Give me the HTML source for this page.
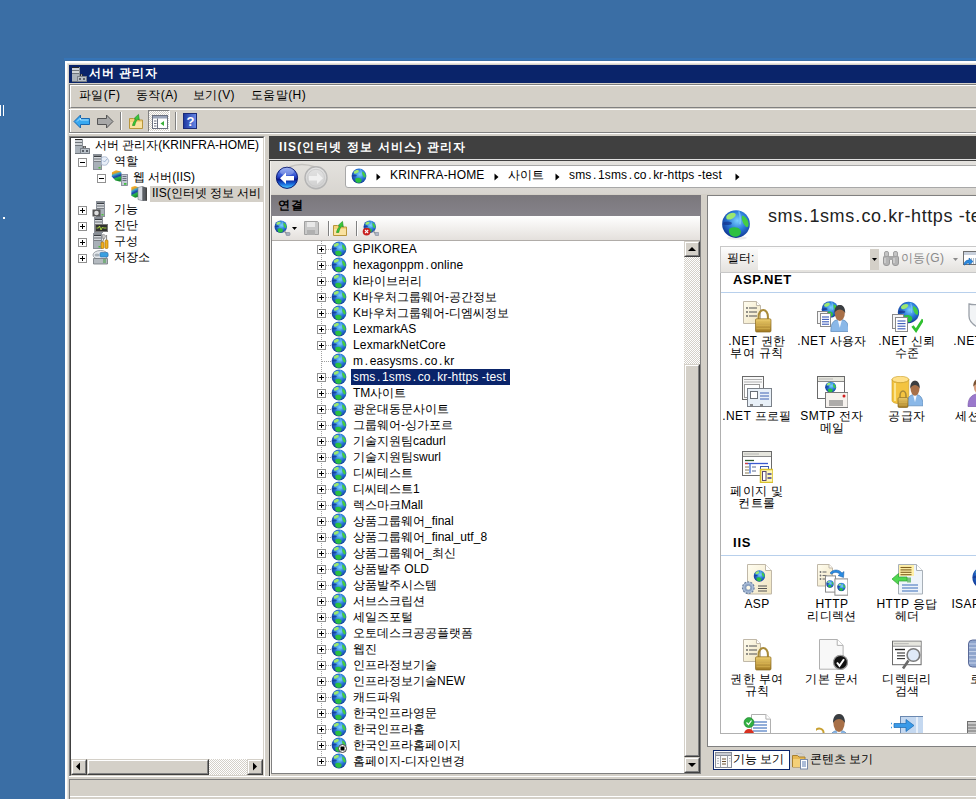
<!DOCTYPE html>
<html><head><meta charset="utf-8">
<style>
*{box-sizing:border-box}
html,body{margin:0;padding:0}
body{width:976px;height:799px;overflow:hidden;position:relative;background:#3a6ea5;font-family:"Liberation Sans",sans-serif;font-size:12px;color:#000}
.a{position:absolute;display:block}
.t{position:absolute;white-space:nowrap;line-height:14px}
.lbl{position:absolute;width:75px;text-align:center;line-height:12px;white-space:nowrap;letter-spacing:0.4px}
.dith{background:repeating-conic-gradient(#fff 0 25%,#d4d0c8 0 50%) 0 0/2px 2px}
</style></head><body>


<svg width="0" height="0" style="position:absolute">
<defs>
<radialGradient id="gglobe" cx="0.55" cy="0.38" r="0.68">
 <stop offset="0" stop-color="#7ad0ff"/><stop offset="0.5" stop-color="#2a78d8"/><stop offset="1" stop-color="#0c2a86"/>
</radialGradient>
<radialGradient id="gblue" cx="0.5" cy="0.3" r="0.7">
 <stop offset="0" stop-color="#8fd0ff"/><stop offset="0.55" stop-color="#1f6fd0"/><stop offset="1" stop-color="#0a2f8a"/>
</radialGradient>
<radialGradient id="ggray" cx="0.5" cy="0.3" r="0.7">
 <stop offset="0" stop-color="#f0f0f0"/><stop offset="0.6" stop-color="#d0d0d0"/><stop offset="1" stop-color="#b0b0b0"/>
</radialGradient>
<linearGradient id="ggold" x1="0" y1="0" x2="0" y2="1">
 <stop offset="0" stop-color="#f0d070"/><stop offset="1" stop-color="#a07820"/>
</linearGradient>
<linearGradient id="gpaper" x1="0" y1="0" x2="1" y2="1">
 <stop offset="0" stop-color="#fffdf0"/><stop offset="1" stop-color="#f0e4c0"/>
</linearGradient>
<symbol id="g16" viewBox="0 0 16 16">
 <circle cx="8" cy="8" r="7.4" fill="url(#gglobe)"/>
 <path d="M3 3.6c1.4-1.6 3.6-2 4.6-1.2.8.9-.4 2-1.4 2.6-1 .6-2.4.9-3 .4-.5-.4-.5-1.2-.2-1.8z" fill="#9be870"/>
 <path d="M1.2 7.2c1.2-.6 3-.8 4.2-.2.8.5.2 1.2-.8 1.4-1.2.2-2.4.1-3.4-.2z" fill="#14308a" opacity="0.7"/>
 <path d="M4.6 10.4c1.8-1 4.4-.9 5.6.5 1 1.3.3 3.2-1.6 3.8-1.9.5-3.6-.4-4.1-1.8-.3-.9-.4-1.8.1-2.5z" fill="#2cc040"/>
 <path d="M11.4 3.4c1.8.5 3.2 2.4 3.3 4.4.1 1.4-.6 2.2-1.4 1.6-.9-.8-1.8-2.3-2.1-3.7-.2-.9-.2-1.8.2-2.3z" fill="#44cc44"/>
 <path d="M9.5 1.2c.8 2 1 4.5.6 7" stroke="#8ad8ff" stroke-width="0.8" fill="none" opacity="0.6"/>
</symbol>
<symbol id="g32" viewBox="0 0 32 32">
 <ellipse cx="16.5" cy="29" rx="10" ry="2" fill="#000" opacity="0.12"/>
 <circle cx="16" cy="15" r="14.5" fill="url(#gglobe)"/>
 <path d="M5 8c3-3 7-4 9-2 1.5 1.6-1 3-3 4.5-1.8 1.3-1.5 3.6-3.6 3.6S3.6 12 4 10z" fill="#3cbc3c"/>
 <path d="M10 20c3-1.6 7-1.2 9 1.2 1.8 2.2.4 5-2.8 6-3.2.8-6-.8-6.8-3.2z" fill="#30b040"/>
 <path d="M22 4c3 1.2 5.6 4.6 6 8 .2 2-1.6 1.6-2.6 0-1.4-2.2-4.4-5.2-3.4-8z" fill="#58d050"/>
 <ellipse cx="11" cy="7" rx="5" ry="3" fill="#fff" opacity="0.35"/>
</symbol>
<symbol id="plus" viewBox="0 0 9 9">
 <rect x="0.5" y="0.5" width="8" height="8" fill="#fff" stroke="#919191"/>
 <rect x="2" y="4" width="5" height="1" fill="#000"/><rect x="4" y="2" width="1" height="5" fill="#000"/>
</symbol>
<symbol id="minus" viewBox="0 0 9 9">
 <rect x="0.5" y="0.5" width="8" height="8" fill="#fff" stroke="#919191"/>
 <rect x="2" y="4" width="5" height="1" fill="#000"/>
</symbol>
<symbol id="server" viewBox="0 0 16 16">
 <rect x="1.5" y="0.5" width="8" height="15" fill="#d4d8dc" stroke="#8a9098"/>
 <rect x="2" y="8" width="7" height="7" fill="#a8b0b8"/>
 <rect x="2" y="1.5" width="7" height="1.5" fill="#3a3e44"/>
 <rect x="2" y="4.5" width="7" height="1" fill="#6a6e74"/>
 <rect x="2" y="7" width="7" height="1" fill="#7a7e84"/>
 <rect x="6.5" y="13" width="2" height="1.5" fill="#50c040"/>
</symbol>
<symbol id="lock32" viewBox="0 0 32 32">
 <path d="M18 19v-4a5 5 0 0 1 10 0v4" fill="none" stroke="#a08030" stroke-width="2.4"/>
 <rect x="15" y="18" width="16" height="13" rx="1.5" fill="url(#ggold)" stroke="#8a6a20"/>
 <path d="M16 21h14M16 24h14M16 27h14" stroke="#c8a040" stroke-width="1"/>
</symbol>
<symbol id="doclist" viewBox="0 0 32 32">
 <path d="M6.5 0.5h12l5 5v17h-17z" fill="url(#gpaper)" stroke="#b8b0a0"/>
 <path d="M18.5 0.5v5h5" fill="#fff" stroke="#b8b0a0"/>
 <circle cx="10" cy="9" r="1" fill="#555"/><rect x="12" y="8.5" width="6" height="1.2" fill="#555"/>
 <circle cx="10" cy="13" r="1" fill="#555"/><rect x="12" y="12.5" width="6" height="1.2" fill="#555"/>
 <circle cx="10" cy="17" r="1" fill="#555"/><rect x="12" y="16.5" width="6" height="1.2" fill="#555"/>
</symbol>
<symbol id="person" viewBox="0 0 32 32">
 <path d="M3 31c0-7 3-11 8-11s8 4 8 11z" fill="#7fb0e0" stroke="#5a88b8" stroke-width="0.8"/>
 <path d="M9 21l2 5 2-5z" fill="#fff"/>
 <ellipse cx="11" cy="13" rx="5" ry="6" fill="#9a6a48"/>
 <path d="M6 12c0-5 3-7 5-7s5 2 5 7c-1-2-3-3-5-3s-4 1-5 3z" fill="#4a4e50"/>
</symbol>
<symbol id="docs2" viewBox="0 0 32 32">
 <rect x="1.5" y="4.5" width="12" height="15" fill="#f4f4f4" stroke="#808080"/>
 <rect x="4.5" y="7.5" width="12" height="15" fill="#fff" stroke="#808080"/>
 <path d="M7 11h7M7 13.5h7M7 16h7M7 18.5h7" stroke="#3a6ac0" stroke-width="1"/>
</symbol>
<symbol id="win32" viewBox="0 0 32 32">
 <rect x="1.5" y="1.5" width="29" height="23" fill="#fff" stroke="#707070"/>
 <rect x="2" y="2" width="28" height="4" fill="#e8e8e0"/>
 <path d="M2 6.5h28" stroke="#707070"/>
</symbol>
</defs></svg>

<div class="a" style="left:0px;top:105px;width:1px;height:11px;background:#fff"></div>
<div class="a" style="left:3px;top:105px;width:1px;height:11px;background:#fff"></div>
<div class="a" style="left:3px;top:217px;width:2px;height:2px;background:#fff"></div>
<div class="a" style="left:64px;top:58px;width:912px;height:2px;background:#3674b6"></div>
<div class="a" style="left:65px;top:61px;width:911px;height:738px;background:#d4d0c8;border-left:2px solid #fff;border-top:2px solid #fff"></div>
<div class="a" style="left:67px;top:63px;width:909px;height:736px;border-left:1px solid #e8e6e0;border-top:1px solid #e8e6e0"></div>
<div class="a" style="left:69px;top:65px;width:907px;height:18px;background:#0a246a"></div>
<svg class="a" style="left:71px;top:66px" width="17" height="16" viewBox="0 0 17 16"><rect x="1" y="1" width="8" height="14" fill="#d0d4d8"/><rect x="1" y="8" width="8" height="7" fill="#aab2ba"/><path d="M1 1.5h8" stroke="#2a2a2a"/><path d="M1 4.5h8M1 7.5h8" stroke="#70767c"/><path d="M1 15.5h8" stroke="#70767c"/><path d="M8.5 1v14" stroke="#8a9096"/><rect x="9" y="8" width="3" height="2" rx="1" fill="#2a2a2a"/><rect x="10" y="8.6" width="1" height="1" fill="#fff"/><rect x="6" y="10" width="10" height="6" rx="0.5" fill="#7a8088"/><rect x="7" y="11" width="8" height="4" fill="#b8c0c8"/><rect x="8" y="12" width="2" height="2" fill="#5a6068"/><rect x="12" y="12" width="2" height="2" fill="#5a6068"/></svg>
<div class="t" style="left:89px;top:65px;color:#fff;font-weight:bold;line-height:16px;letter-spacing:1px">서버 관리자</div>
<div class="a" style="left:69px;top:84px;width:907px;height:25px;border-top:1px solid #808080;border-left:1px solid #808080"></div>
<div class="a" style="left:70px;top:85px;width:906px;height:23px;border-top:1px solid #fff;border-left:1px solid #fff;border-bottom:1px solid #808080"></div>
<div class="a" style="left:69px;top:109px;width:907px;height:1px;background:#fff"></div>
<div class="t" style="left:79px;top:88px;letter-spacing:0.4px">파일(F)</div>
<div class="t" style="left:136px;top:88px;letter-spacing:0.4px">동작(A)</div>
<div class="t" style="left:193px;top:88px;letter-spacing:0.4px">보기(V)</div>
<div class="t" style="left:251px;top:88px;letter-spacing:0.4px">도움말(H)</div>
<div class="a" style="left:69px;top:110px;width:1px;height:23px;background:#808080"></div>
<div class="a" style="left:70px;top:110px;width:1px;height:23px;background:#fff"></div>
<div class="a" style="left:69px;top:132px;width:907px;height:1px;background:#808080"></div>
<div class="a" style="left:69px;top:133px;width:907px;height:1px;background:#fff"></div>
<svg class="a" style="left:73px;top:114px" width="18" height="15" viewBox="0 0 18 15"><path d="M1 7.5L7.5 1v3.5h9v6h-9V14z" fill="#38a8f0" stroke="#1a68b0" stroke-width="1"/><path d="M4 7.5l3.5-3.5v2h8" fill="none" stroke="#a8e0ff" stroke-width="1"/></svg>
<svg class="a" style="left:96px;top:114px" width="18" height="15" viewBox="0 0 18 15"><path d="M17 7.5L10.5 1v3.5h-9v6h9V14z" fill="#a8a8a8" stroke="#555" stroke-width="1"/></svg>
<div class="a" style="left:120px;top:112px;width:1px;height:18px;background:#808080"></div>
<div class="a" style="left:121px;top:112px;width:1px;height:18px;background:#fff"></div>
<svg class="a" style="left:128px;top:113px" width="16" height="16" viewBox="0 0 16 16"><path d="M1.5 5.5h4l1.5 1.5h7.5v8.5h-13z" fill="#f4d27a" stroke="#b8963c"/><path d="M2 9h12v6H2z" fill="#fae2a0"/><path d="M4.5 12.5c.5-3 2-5 3.5-6.5l-1.8-.6 4.3-4 .8 5.6-1.6-1c-1.2 1.5-2.4 3.6-3 6.5z" fill="#3ac83a" stroke="#1a8a1a" stroke-width="0.6"/></svg>
<div class="a" style="left:148px;top:110px;width:22px;height:22px;border-top:1px solid #808080;border-left:1px solid #808080;border-bottom:1px solid #fff;border-right:1px solid #fff"></div>
<div class="a" style="left:149px;top:111px;width:20px;height:20px;"></div>
<div class="a dith" style="left:149px;top:111px;width:20px;height:20px"></div>
<svg class="a" style="left:152px;top:115px" width="16" height="14" viewBox="0 0 16 14"><rect x="0.5" y="0.5" width="15" height="13" fill="#fff" stroke="#6a7080"/><rect x="1" y="1" width="14" height="2.5" fill="#9aa4b8"/><path d="M5.5 3.5v10" stroke="#6a7080"/><path d="M2 6h2.5M2 8.5h2.5M2 11h2.5" stroke="#6a7080"/><path d="M12 6l-3.5 2.5 3.5 2.5z" fill="#3ab03a"/></svg>
<div class="a" style="left:175px;top:112px;width:1px;height:18px;background:#808080"></div>
<div class="a" style="left:176px;top:112px;width:1px;height:18px;background:#fff"></div>
<svg class="a" style="left:183px;top:113px" width="14" height="16" viewBox="0 0 14 16"><defs><linearGradient id="ghelp" x1="0" x2="1"><stop offset="0" stop-color="#1a36a0"/><stop offset="1" stop-color="#6a8ae8"/></linearGradient></defs><rect x="0.5" y="0.5" width="13" height="15" fill="url(#ghelp)" stroke="#1a2a78"/><text x="7.5" y="13" font-family="Liberation Sans" font-weight="bold" font-size="13" fill="#fff" text-anchor="middle">?</text></svg>
<div class="a" style="left:69px;top:136px;width:196px;height:641px;background:#fff;border-top:1px solid #808080;border-left:1px solid #808080;border-right:1px solid #fff;border-bottom:1px solid #fff"></div>
<div class="a" style="left:70px;top:137px;width:194px;height:639px;border-top:1px solid #404040;border-left:1px solid #404040;border-right:1px solid #d4d0c8;border-bottom:1px solid #d4d0c8"></div>
<svg class="a" style="left:74px;top:138px" width="17" height="16" viewBox="0 0 17 16"><rect x="1" y="1" width="8" height="14" fill="#d0d4d8"/><rect x="1" y="8" width="8" height="7" fill="#aab2ba"/><path d="M1 1.5h8" stroke="#2a2a2a"/><path d="M1 4.5h8M1 7.5h8" stroke="#70767c"/><path d="M1 15.5h8" stroke="#70767c"/><path d="M8.5 1v14" stroke="#8a9096"/><rect x="9" y="8" width="3" height="2" rx="1" fill="#2a2a2a"/><rect x="10" y="8.6" width="1" height="1" fill="#fff"/><rect x="6" y="10" width="10" height="6" rx="0.5" fill="#7a8088"/><rect x="7" y="11" width="8" height="4" fill="#b8c0c8"/><rect x="8" y="12" width="2" height="2" fill="#5a6068"/><rect x="12" y="12" width="2" height="2" fill="#5a6068"/></svg>
<div class="t" style="left:95px;top:138px;">서버 관리자(KRINFRA-HOME)</div>
<svg class="a" style="left:78px;top:158px" width="9" height="9"><use href="#minus"/></svg>
<svg class="a" style="left:92px;top:154px" width="18" height="16" viewBox="0 0 18 16"><use href="#server" width="16" height="16"/><path d="M9.5 3.5c2-1 4-1 5.5 0l2 3.5-2 3.5c-1.5 1-3.5 1-5.5 0z" fill="#e8eef8" stroke="#a0b0c8" stroke-width="0.8"/><path d="M11 6.5l1.5 1.5 2.5-3" fill="none" stroke="#90a8c8" stroke-width="0.8"/></svg>
<div class="t" style="left:114px;top:154px;">역할</div>
<svg class="a" style="left:97px;top:174px" width="9" height="9"><use href="#minus"/></svg>
<svg class="a" style="left:111px;top:170px" width="17" height="16" viewBox="0 0 17 16"><defs><linearGradient id="giis" x1="0" y1="0" x2="0.3" y2="1"><stop offset="0" stop-color="#f8c040"/><stop offset="0.28" stop-color="#e8a020"/><stop offset="0.42" stop-color="#40a8c8"/><stop offset="0.62" stop-color="#1a40b0"/><stop offset="0.78" stop-color="#28b848"/><stop offset="1" stop-color="#1a8a30"/></linearGradient></defs><path d="M1 2.2L5 .3l5 1.2 1.2 4.5-1.6 5.8-5.2-1.2L.8 6.5z" fill="url(#giis)"/><rect x="10.5" y="4.5" width="6" height="11" fill="#c4cad6" stroke="#7a8090" stroke-width="0.8"/><path d="M11.5 6.5h4M11.5 8.5h4M11.5 10.5h4" stroke="#505868" stroke-width="0.8"/><rect x="13" y="13" width="2.5" height="1.8" fill="#40c040"/></svg>
<div class="t" style="left:133px;top:170px;">웹 서버(IIS)</div>
<div class="a" style="left:150px;top:186px;width:114px;height:16px;background:#d4d0c8"></div>
<svg class="a" style="left:130px;top:186px" width="17" height="15" viewBox="0 0 17 15"><path d="M1.3 1L5 0l3.6 1.2v9.6l-3.4 1L1.3 9.8z" fill="url(#giis)"/><path d="M8 1.5l4.5-1.2v14.5L8 13.5z" fill="#d8dce2" stroke="#7a8088" stroke-width="0.6"/><path d="M12.5 .3l3.8 1.2v13.3l-3.8 .1z" fill="#5a5e64"/><path d="M16.3 1.5v13.3" stroke="#202020"/></svg>
<div class="t" style="left:152px;top:186px;">IIS(인터넷 정보 서비</div>
<svg class="a" style="left:78px;top:206px" width="9" height="9"><use href="#plus"/></svg>
<svg class="a" style="left:92px;top:201px" width="17" height="16" viewBox="0 0 17 16"><use href="#server" x="3" width="16" height="16"/><rect x="0.5" y="8.5" width="8" height="7" fill="#555"/><circle cx="4.5" cy="12" r="2.3" fill="#ddd"/></svg>
<div class="t" style="left:114px;top:202px;">기능</div>
<svg class="a" style="left:78px;top:222px" width="9" height="9"><use href="#plus"/></svg>
<svg class="a" style="left:92px;top:217px" width="17" height="16" viewBox="0 0 17 16"><use href="#server" x="1" width="16" height="16"/><rect x="3.5" y="7.5" width="12" height="7" fill="#303030" stroke="#777"/><path d="M4.5 11l2 0 1-2 1.5 4 1.5-3 1 1h3" fill="none" stroke="#b0e040" stroke-width="0.9"/></svg>
<div class="t" style="left:114px;top:218px;">진단</div>
<svg class="a" style="left:78px;top:238px" width="9" height="9"><use href="#plus"/></svg>
<svg class="a" style="left:92px;top:233px" width="17" height="16" viewBox="0 0 17 16"><use href="#server" x="0" width="16" height="16"/><path d="M10.5 1.5c1.5-.5 3 .5 3 2l-1.5 2.5-1.5-.5z" fill="#c8c8c8" stroke="#808080" stroke-width="0.6"/><path d="M12 5l-1.5 4" stroke="#909090" stroke-width="1.2"/><rect x="9" y="9" width="3" height="6.5" rx="1" fill="#f0b020" stroke="#a06800" stroke-width="0.6"/><path d="M14.5 2v5" stroke="#909090" stroke-width="1.2"/><rect x="13" y="7" width="3" height="8.5" rx="1" fill="#f0b020" stroke="#a06800" stroke-width="0.6"/></svg>
<div class="t" style="left:114px;top:234px;">구성</div>
<svg class="a" style="left:78px;top:254px" width="9" height="9"><use href="#plus"/></svg>
<svg class="a" style="left:92px;top:249px" width="17" height="16" viewBox="0 0 17 16"><ellipse cx="8.5" cy="6" rx="7.5" ry="4.5" fill="#e4e8ec" stroke="#8a9098" stroke-width="0.8"/><ellipse cx="5" cy="6" rx="2.5" ry="1.6" fill="#a8b0b8"/><rect x="8" y="3.5" width="8" height="4.5" rx="1" fill="#3aa0e0" stroke="#2a70b0" stroke-width="0.6"/><path d="M1.5 9.5h14v5.5h-14z" fill="#b4bac0" stroke="#70767c" stroke-width="0.8"/><path d="M11 11h3M11 13h3" stroke="#40a040" stroke-width="1"/></svg>
<div class="t" style="left:114px;top:250px;">저장소</div>
<div class="a dith" style="left:71px;top:759px;width:192px;height:16px"></div>
<div class="a" style="left:71px;top:759px;width:16px;height:16px;background:#d4d0c8;border-top:1px solid #d4d0c8;border-left:1px solid #d4d0c8;border-right:1px solid #404040;border-bottom:1px solid #404040"></div>
<div class="a" style="left:72px;top:760px;width:14px;height:14px;border-top:1px solid #fff;border-left:1px solid #fff;border-right:1px solid #808080;border-bottom:1px solid #808080"></div>
<svg class="a" style="left:71px;top:759px" width="16" height="16" viewBox="0 0 16 16"><path d="M5 7.5l4-4v8z" fill="#000"/></svg>
<div class="a" style="left:87px;top:759px;width:122px;height:16px;background:#d4d0c8;border-top:1px solid #d4d0c8;border-left:1px solid #d4d0c8;border-right:1px solid #404040;border-bottom:1px solid #404040"></div>
<div class="a" style="left:88px;top:760px;width:120px;height:14px;border-top:1px solid #fff;border-left:1px solid #fff;border-right:1px solid #808080;border-bottom:1px solid #808080"></div>
<div class="a" style="left:247px;top:759px;width:16px;height:16px;background:#d4d0c8;border-top:1px solid #d4d0c8;border-left:1px solid #d4d0c8;border-right:1px solid #404040;border-bottom:1px solid #404040"></div>
<div class="a" style="left:248px;top:760px;width:14px;height:14px;border-top:1px solid #fff;border-left:1px solid #fff;border-right:1px solid #808080;border-bottom:1px solid #808080"></div>
<svg class="a" style="left:247px;top:759px" width="16" height="16" viewBox="0 0 16 16"><path d="M10 7.5l-4-4v8z" fill="#000"/></svg>
<div class="a" style="left:265px;top:136px;width:4px;height:641px;background:#d4d0c8"></div>
<div class="a" style="left:269px;top:136px;width:707px;height:23px;background:#404040"></div>
<div class="t" style="left:279px;top:140px;color:#fff;font-weight:bold;letter-spacing:1.2px">IIS(인터넷 정보 서비스) 관리자</div>
<div class="a" style="left:269px;top:159px;width:707px;height:1px;background:#e0e0e0"></div>
<div class="a" style="left:269px;top:160px;width:707px;height:616px;background:#d4d0c8;border-top:1px solid #404040;border-left:1px solid #404040"></div>
<div class="a" style="left:270px;top:161px;width:1px;height:615px;background:#f4f2ee"></div>
<div class="a" style="left:271px;top:161px;width:705px;height:33px;background:linear-gradient(#e4e2de,#d8d5d0)"></div>
<svg class="a" style="left:272px;top:163px" width="60" height="29" viewBox="0 0 60 29"><defs><linearGradient id="gbk" x1="0" y1="0" x2="0" y2="1"><stop offset="0" stop-color="#7a98f0"/><stop offset="0.42" stop-color="#3050d0"/><stop offset="0.58" stop-color="#0a1890"/><stop offset="0.8" stop-color="#1a70e0"/><stop offset="1" stop-color="#50d0ff"/></linearGradient>
<linearGradient id="gfw" x1="0" y1="0" x2="0" y2="1"><stop offset="0" stop-color="#e4e4e4"/><stop offset="1" stop-color="#cfcfcf"/></linearGradient></defs>
<path d="M17 4 Q30 -1 43 4" fill="none" stroke="#c4c2be" stroke-width="1.6"/>
<circle cx="15" cy="14.8" r="11.4" fill="#d8d8e8" opacity="0.5"/>
<circle cx="15" cy="14.8" r="10.6" fill="url(#gbk)" stroke="#0a1a70" stroke-width="1"/>
<ellipse cx="15" cy="8.5" rx="7" ry="4" fill="#fff" opacity="0.25"/>
<path d="M8 15.2l6-5.8v3.6h8v4.4h-8v3.6z" fill="#fff"/>
<circle cx="44" cy="14.8" r="11" fill="url(#gfw)" stroke="#b4b4b4" stroke-width="1.4"/>
<circle cx="44" cy="14.8" r="8.5" fill="none" stroke="#c8c8c8" stroke-width="0.8"/>
<path d="M51 15.2l-6-5.8v3.6h-8v4.4h8v3.6z" fill="#f0f0f0"/></svg>
<div class="a" style="left:345px;top:165px;width:640px;height:23px;background:#fff;border:1px solid #a8a8a8;border-radius:3px"></div>
<svg class="a" style="left:351px;top:168px" width="16" height="16"><use href="#g16"/></svg>
<svg class="a" style="left:376px;top:173px" width="5" height="8" viewBox="0 0 5 8"><path d="M0.5 0.5l4 3.5-4 3.5z" fill="#000"/></svg>
<div class="t" style="left:390px;top:168px;letter-spacing:0.15px">KRINFRA-HOME</div>
<svg class="a" style="left:494px;top:173px" width="5" height="8" viewBox="0 0 5 8"><path d="M0.5 0.5l4 3.5-4 3.5z" fill="#000"/></svg>
<div class="t" style="left:508px;top:168px;">사이트</div>
<svg class="a" style="left:555px;top:173px" width="5" height="8" viewBox="0 0 5 8"><path d="M0.5 0.5l4 3.5-4 3.5z" fill="#000"/></svg>
<div class="t" style="left:569px;top:168px;letter-spacing:0.15px">sms<span style="margin:0 1.5px">.</span>1sms<span style="margin:0 1.5px">.</span>co<span style="margin:0 1.5px">.</span>kr-https -test</div>
<svg class="a" style="left:735px;top:173px" width="5" height="8" viewBox="0 0 5 8"><path d="M0.5 0.5l4 3.5-4 3.5z" fill="#000"/></svg>
<div class="a" style="left:271px;top:195px;width:430px;height:579px;background:#fff;border:1px solid #808080"></div>
<div class="a" style="left:271px;top:195px;width:430px;height:21px;background:linear-gradient(#7a777c,#86838a)"></div>
<div class="t" style="left:278px;top:198px;font-weight:bold;letter-spacing:1px;color:#000">연결</div>
<div class="a" style="left:272px;top:216px;width:428px;height:24px;background:linear-gradient(#ffffff,#e4e0dc)"></div>
<div class="a" style="left:272px;top:240px;width:428px;height:1px;background:#b0aca8"></div>
<svg class="a" style="left:273px;top:219px" width="26" height="18" viewBox="0 0 26 18"><use href="#g16" x="1" y="1" width="13.5" height="13.5"/><path d="M11 12l3 3" stroke="#8a9098" stroke-width="1.2"/><rect x="13" y="13.5" width="4" height="3" rx="0.8" fill="#a8b0c0" stroke="#707888" stroke-width="0.5"/><path d="M19 8h5l-2.5 3z" fill="#000"/></svg>
<svg class="a" style="left:303px;top:220px" width="17" height="16" viewBox="0 0 17 16"><path d="M1.5 1.5h13l1 1v12h-14z" fill="#c8c8c8" stroke="#a0a0a0"/><rect x="4" y="2" width="8" height="5" fill="#e8e8e8"/><rect x="4" y="10" width="8" height="5" fill="#b0b0b0"/></svg>
<div class="a" style="left:328px;top:221px;width:1px;height:15px;background:#808080"></div>
<div class="a" style="left:329px;top:221px;width:1px;height:15px;background:#fff"></div>
<svg class="a" style="left:332px;top:220px" width="16" height="16" viewBox="0 0 16 16"><path d="M1.5 5.5h4l1.5 1.5h7.5v8.5h-13z" fill="#f4d27a" stroke="#b8963c"/><path d="M2 9h12v6H2z" fill="#fae2a0"/><path d="M4.5 12.5c.5-3 2-5 3.5-6.5l-1.8-.6 4.3-4 .8 5.6-1.6-1c-1.2 1.5-2.4 3.6-3 6.5z" fill="#3ac83a" stroke="#1a8a1a" stroke-width="0.6"/></svg>
<div class="a" style="left:356px;top:221px;width:1px;height:15px;background:#808080"></div>
<div class="a" style="left:357px;top:221px;width:1px;height:15px;background:#fff"></div>
<svg class="a" style="left:361px;top:219px" width="18" height="18" viewBox="0 0 18 18"><use href="#g16" x="2" y="1" width="13.5" height="13.5"/><path d="M12 12l3 3" stroke="#8a9098" stroke-width="1.2"/><rect x="14" y="13.5" width="4" height="3" rx="0.8" fill="#b0b8c8" stroke="#707888" stroke-width="0.5"/><circle cx="5.6" cy="12.6" r="3.9" fill="#c82020"/><path d="M4 11l3.2 3.2M7.2 11L4 14.2" stroke="#fff" stroke-width="1.1"/></svg>
<div class="a" style="left:321px;top:241px;width:1px;height:519px;background:repeating-linear-gradient(to bottom,#a0a0a0 0 1px,transparent 1px 2px)"></div>
<div class="a" style="left:322px;top:249px;width:9px;height:1px;background:repeating-linear-gradient(to right,#a0a0a0 0 1px,transparent 1px 2px)"></div>
<svg class="a" style="left:317px;top:245px" width="9" height="9"><use href="#plus"/></svg>
<svg class="a" style="left:331px;top:241px" width="16" height="16"><use href="#g16"/></svg>
<div class="t" style="left:353px;top:242px;letter-spacing:0.15px">GPIKOREA</div>
<div class="a" style="left:322px;top:265px;width:9px;height:1px;background:repeating-linear-gradient(to right,#a0a0a0 0 1px,transparent 1px 2px)"></div>
<svg class="a" style="left:317px;top:261px" width="9" height="9"><use href="#plus"/></svg>
<svg class="a" style="left:331px;top:257px" width="16" height="16"><use href="#g16"/></svg>
<div class="t" style="left:353px;top:258px;letter-spacing:0.15px">hexagonppm<span style="margin:0 1.5px">.</span>online</div>
<div class="a" style="left:322px;top:281px;width:9px;height:1px;background:repeating-linear-gradient(to right,#a0a0a0 0 1px,transparent 1px 2px)"></div>
<svg class="a" style="left:317px;top:277px" width="9" height="9"><use href="#plus"/></svg>
<svg class="a" style="left:331px;top:273px" width="16" height="16"><use href="#g16"/></svg>
<div class="t" style="left:353px;top:274px;">kl라이브러리</div>
<div class="a" style="left:322px;top:297px;width:9px;height:1px;background:repeating-linear-gradient(to right,#a0a0a0 0 1px,transparent 1px 2px)"></div>
<svg class="a" style="left:317px;top:293px" width="9" height="9"><use href="#plus"/></svg>
<svg class="a" style="left:331px;top:289px" width="16" height="16"><use href="#g16"/></svg>
<div class="t" style="left:353px;top:290px;">K바우처그룹웨어-공간정보</div>
<div class="a" style="left:322px;top:313px;width:9px;height:1px;background:repeating-linear-gradient(to right,#a0a0a0 0 1px,transparent 1px 2px)"></div>
<svg class="a" style="left:317px;top:309px" width="9" height="9"><use href="#plus"/></svg>
<svg class="a" style="left:331px;top:305px" width="16" height="16"><use href="#g16"/></svg>
<div class="t" style="left:353px;top:306px;">K바우처그룹웨어-디엠씨정보</div>
<div class="a" style="left:322px;top:329px;width:9px;height:1px;background:repeating-linear-gradient(to right,#a0a0a0 0 1px,transparent 1px 2px)"></div>
<svg class="a" style="left:317px;top:325px" width="9" height="9"><use href="#plus"/></svg>
<svg class="a" style="left:331px;top:321px" width="16" height="16"><use href="#g16"/></svg>
<div class="t" style="left:353px;top:322px;letter-spacing:0.15px">LexmarkAS</div>
<div class="a" style="left:322px;top:345px;width:9px;height:1px;background:repeating-linear-gradient(to right,#a0a0a0 0 1px,transparent 1px 2px)"></div>
<svg class="a" style="left:317px;top:341px" width="9" height="9"><use href="#plus"/></svg>
<svg class="a" style="left:331px;top:337px" width="16" height="16"><use href="#g16"/></svg>
<div class="t" style="left:353px;top:338px;letter-spacing:0.15px">LexmarkNetCore</div>
<div class="a" style="left:322px;top:361px;width:9px;height:1px;background:repeating-linear-gradient(to right,#a0a0a0 0 1px,transparent 1px 2px)"></div>
<svg class="a" style="left:331px;top:353px" width="16" height="16"><use href="#g16"/></svg>
<div class="t" style="left:353px;top:354px;letter-spacing:0.15px">m<span style="margin:0 1.5px">.</span>easysms<span style="margin:0 1.5px">.</span>co<span style="margin:0 1.5px">.</span>kr</div>
<div class="a" style="left:322px;top:377px;width:9px;height:1px;background:repeating-linear-gradient(to right,#a0a0a0 0 1px,transparent 1px 2px)"></div>
<svg class="a" style="left:317px;top:373px" width="9" height="9"><use href="#plus"/></svg>
<svg class="a" style="left:331px;top:369px" width="16" height="16"><use href="#g16"/></svg>
<div class="a" style="left:351px;top:369px;width:159px;height:16px;background:#0a246a"></div>
<div class="t" style="left:353px;top:370px;color:#fff;letter-spacing:0.15px">sms<span style="margin:0 1.5px">.</span>1sms<span style="margin:0 1.5px">.</span>co<span style="margin:0 1.5px">.</span>kr-https -test</div>
<div class="a" style="left:322px;top:393px;width:9px;height:1px;background:repeating-linear-gradient(to right,#a0a0a0 0 1px,transparent 1px 2px)"></div>
<svg class="a" style="left:317px;top:389px" width="9" height="9"><use href="#plus"/></svg>
<svg class="a" style="left:331px;top:385px" width="16" height="16"><use href="#g16"/></svg>
<div class="t" style="left:353px;top:386px;">TM사이트</div>
<div class="a" style="left:322px;top:409px;width:9px;height:1px;background:repeating-linear-gradient(to right,#a0a0a0 0 1px,transparent 1px 2px)"></div>
<svg class="a" style="left:317px;top:405px" width="9" height="9"><use href="#plus"/></svg>
<svg class="a" style="left:331px;top:401px" width="16" height="16"><use href="#g16"/></svg>
<div class="t" style="left:353px;top:402px;">광운대동문사이트</div>
<div class="a" style="left:322px;top:425px;width:9px;height:1px;background:repeating-linear-gradient(to right,#a0a0a0 0 1px,transparent 1px 2px)"></div>
<svg class="a" style="left:317px;top:421px" width="9" height="9"><use href="#plus"/></svg>
<svg class="a" style="left:331px;top:417px" width="16" height="16"><use href="#g16"/></svg>
<div class="t" style="left:353px;top:418px;">그룹웨어-싱가포르</div>
<div class="a" style="left:322px;top:441px;width:9px;height:1px;background:repeating-linear-gradient(to right,#a0a0a0 0 1px,transparent 1px 2px)"></div>
<svg class="a" style="left:317px;top:437px" width="9" height="9"><use href="#plus"/></svg>
<svg class="a" style="left:331px;top:433px" width="16" height="16"><use href="#g16"/></svg>
<div class="t" style="left:353px;top:434px;">기술지원팀cadurl</div>
<div class="a" style="left:322px;top:457px;width:9px;height:1px;background:repeating-linear-gradient(to right,#a0a0a0 0 1px,transparent 1px 2px)"></div>
<svg class="a" style="left:317px;top:453px" width="9" height="9"><use href="#plus"/></svg>
<svg class="a" style="left:331px;top:449px" width="16" height="16"><use href="#g16"/></svg>
<div class="t" style="left:353px;top:450px;">기술지원팀swurl</div>
<div class="a" style="left:322px;top:473px;width:9px;height:1px;background:repeating-linear-gradient(to right,#a0a0a0 0 1px,transparent 1px 2px)"></div>
<svg class="a" style="left:317px;top:469px" width="9" height="9"><use href="#plus"/></svg>
<svg class="a" style="left:331px;top:465px" width="16" height="16"><use href="#g16"/></svg>
<div class="t" style="left:353px;top:466px;">디씨테스트</div>
<div class="a" style="left:322px;top:489px;width:9px;height:1px;background:repeating-linear-gradient(to right,#a0a0a0 0 1px,transparent 1px 2px)"></div>
<svg class="a" style="left:317px;top:485px" width="9" height="9"><use href="#plus"/></svg>
<svg class="a" style="left:331px;top:481px" width="16" height="16"><use href="#g16"/></svg>
<div class="t" style="left:353px;top:482px;">디씨테스트1</div>
<div class="a" style="left:322px;top:505px;width:9px;height:1px;background:repeating-linear-gradient(to right,#a0a0a0 0 1px,transparent 1px 2px)"></div>
<svg class="a" style="left:317px;top:501px" width="9" height="9"><use href="#plus"/></svg>
<svg class="a" style="left:331px;top:497px" width="16" height="16"><use href="#g16"/></svg>
<div class="t" style="left:353px;top:498px;">렉스마크Mall</div>
<div class="a" style="left:322px;top:521px;width:9px;height:1px;background:repeating-linear-gradient(to right,#a0a0a0 0 1px,transparent 1px 2px)"></div>
<svg class="a" style="left:317px;top:517px" width="9" height="9"><use href="#plus"/></svg>
<svg class="a" style="left:331px;top:513px" width="16" height="16"><use href="#g16"/></svg>
<div class="t" style="left:353px;top:514px;">상품그룹웨어_final</div>
<div class="a" style="left:322px;top:537px;width:9px;height:1px;background:repeating-linear-gradient(to right,#a0a0a0 0 1px,transparent 1px 2px)"></div>
<svg class="a" style="left:317px;top:533px" width="9" height="9"><use href="#plus"/></svg>
<svg class="a" style="left:331px;top:529px" width="16" height="16"><use href="#g16"/></svg>
<div class="t" style="left:353px;top:530px;">상품그룹웨어_final_utf_8</div>
<div class="a" style="left:322px;top:553px;width:9px;height:1px;background:repeating-linear-gradient(to right,#a0a0a0 0 1px,transparent 1px 2px)"></div>
<svg class="a" style="left:317px;top:549px" width="9" height="9"><use href="#plus"/></svg>
<svg class="a" style="left:331px;top:545px" width="16" height="16"><use href="#g16"/></svg>
<div class="t" style="left:353px;top:546px;">상품그룹웨어_최신</div>
<div class="a" style="left:322px;top:569px;width:9px;height:1px;background:repeating-linear-gradient(to right,#a0a0a0 0 1px,transparent 1px 2px)"></div>
<svg class="a" style="left:317px;top:565px" width="9" height="9"><use href="#plus"/></svg>
<svg class="a" style="left:331px;top:561px" width="16" height="16"><use href="#g16"/></svg>
<div class="t" style="left:353px;top:562px;">상품발주 OLD</div>
<div class="a" style="left:322px;top:585px;width:9px;height:1px;background:repeating-linear-gradient(to right,#a0a0a0 0 1px,transparent 1px 2px)"></div>
<svg class="a" style="left:317px;top:581px" width="9" height="9"><use href="#plus"/></svg>
<svg class="a" style="left:331px;top:577px" width="16" height="16"><use href="#g16"/></svg>
<div class="t" style="left:353px;top:578px;">상품발주시스템</div>
<div class="a" style="left:322px;top:601px;width:9px;height:1px;background:repeating-linear-gradient(to right,#a0a0a0 0 1px,transparent 1px 2px)"></div>
<svg class="a" style="left:317px;top:597px" width="9" height="9"><use href="#plus"/></svg>
<svg class="a" style="left:331px;top:593px" width="16" height="16"><use href="#g16"/></svg>
<div class="t" style="left:353px;top:594px;">서브스크립션</div>
<div class="a" style="left:322px;top:617px;width:9px;height:1px;background:repeating-linear-gradient(to right,#a0a0a0 0 1px,transparent 1px 2px)"></div>
<svg class="a" style="left:317px;top:613px" width="9" height="9"><use href="#plus"/></svg>
<svg class="a" style="left:331px;top:609px" width="16" height="16"><use href="#g16"/></svg>
<div class="t" style="left:353px;top:610px;">세일즈포털</div>
<div class="a" style="left:322px;top:633px;width:9px;height:1px;background:repeating-linear-gradient(to right,#a0a0a0 0 1px,transparent 1px 2px)"></div>
<svg class="a" style="left:317px;top:629px" width="9" height="9"><use href="#plus"/></svg>
<svg class="a" style="left:331px;top:625px" width="16" height="16"><use href="#g16"/></svg>
<div class="t" style="left:353px;top:626px;">오토데스크공공플랫폼</div>
<div class="a" style="left:322px;top:649px;width:9px;height:1px;background:repeating-linear-gradient(to right,#a0a0a0 0 1px,transparent 1px 2px)"></div>
<svg class="a" style="left:317px;top:645px" width="9" height="9"><use href="#plus"/></svg>
<svg class="a" style="left:331px;top:641px" width="16" height="16"><use href="#g16"/></svg>
<div class="t" style="left:353px;top:642px;">웹진</div>
<div class="a" style="left:322px;top:665px;width:9px;height:1px;background:repeating-linear-gradient(to right,#a0a0a0 0 1px,transparent 1px 2px)"></div>
<svg class="a" style="left:317px;top:661px" width="9" height="9"><use href="#plus"/></svg>
<svg class="a" style="left:331px;top:657px" width="16" height="16"><use href="#g16"/></svg>
<div class="t" style="left:353px;top:658px;">인프라정보기술</div>
<div class="a" style="left:322px;top:681px;width:9px;height:1px;background:repeating-linear-gradient(to right,#a0a0a0 0 1px,transparent 1px 2px)"></div>
<svg class="a" style="left:317px;top:677px" width="9" height="9"><use href="#plus"/></svg>
<svg class="a" style="left:331px;top:673px" width="16" height="16"><use href="#g16"/></svg>
<div class="t" style="left:353px;top:674px;">인프라정보기술NEW</div>
<div class="a" style="left:322px;top:697px;width:9px;height:1px;background:repeating-linear-gradient(to right,#a0a0a0 0 1px,transparent 1px 2px)"></div>
<svg class="a" style="left:317px;top:693px" width="9" height="9"><use href="#plus"/></svg>
<svg class="a" style="left:331px;top:689px" width="16" height="16"><use href="#g16"/></svg>
<div class="t" style="left:353px;top:690px;">캐드파워</div>
<div class="a" style="left:322px;top:713px;width:9px;height:1px;background:repeating-linear-gradient(to right,#a0a0a0 0 1px,transparent 1px 2px)"></div>
<svg class="a" style="left:317px;top:709px" width="9" height="9"><use href="#plus"/></svg>
<svg class="a" style="left:331px;top:705px" width="16" height="16"><use href="#g16"/></svg>
<div class="t" style="left:353px;top:706px;">한국인프라영문</div>
<div class="a" style="left:322px;top:729px;width:9px;height:1px;background:repeating-linear-gradient(to right,#a0a0a0 0 1px,transparent 1px 2px)"></div>
<svg class="a" style="left:317px;top:725px" width="9" height="9"><use href="#plus"/></svg>
<svg class="a" style="left:331px;top:721px" width="16" height="16"><use href="#g16"/></svg>
<div class="t" style="left:353px;top:722px;">한국인프라홈</div>
<div class="a" style="left:322px;top:745px;width:9px;height:1px;background:repeating-linear-gradient(to right,#a0a0a0 0 1px,transparent 1px 2px)"></div>
<svg class="a" style="left:317px;top:741px" width="9" height="9"><use href="#plus"/></svg>
<svg class="a" style="left:331px;top:737px" width="16" height="16"><use href="#g16"/></svg>
<svg class="a" style="left:338px;top:744px" width="9" height="9" viewBox="0 0 9 9"><circle cx="4.5" cy="4.5" r="4" fill="#fff" stroke="#404040"/><rect x="2.5" y="2.5" width="4" height="4" fill="#000"/></svg>
<div class="t" style="left:353px;top:738px;">한국인프라홈페이지</div>
<div class="a" style="left:322px;top:761px;width:9px;height:1px;background:repeating-linear-gradient(to right,#a0a0a0 0 1px,transparent 1px 2px)"></div>
<svg class="a" style="left:317px;top:757px" width="9" height="9"><use href="#plus"/></svg>
<svg class="a" style="left:331px;top:753px" width="16" height="16"><use href="#g16"/></svg>
<div class="t" style="left:353px;top:754px;">홈페이지-디자인변경</div>
<div class="a dith" style="left:684px;top:241px;width:16px;height:532px"></div>
<div class="a" style="left:684px;top:241px;width:16px;height:16px;background:#d4d0c8;border-top:1px solid #d4d0c8;border-left:1px solid #d4d0c8;border-right:1px solid #404040;border-bottom:1px solid #404040"></div>
<div class="a" style="left:685px;top:242px;width:14px;height:14px;border-top:1px solid #fff;border-left:1px solid #fff;border-right:1px solid #808080;border-bottom:1px solid #808080"></div>
<svg class="a" style="left:684px;top:241px" width="16" height="16" viewBox="0 0 16 16"><path d="M8 6l4 4H4z" fill="#000"/></svg>
<div class="a" style="left:684px;top:364px;width:16px;height:393px;background:#d4d0c8;border-top:1px solid #d4d0c8;border-left:1px solid #d4d0c8;border-right:1px solid #404040;border-bottom:1px solid #404040"></div>
<div class="a" style="left:685px;top:365px;width:14px;height:391px;border-top:1px solid #fff;border-left:1px solid #fff;border-right:1px solid #808080;border-bottom:1px solid #808080"></div>
<div class="a" style="left:684px;top:757px;width:16px;height:16px;background:#d4d0c8;border-top:1px solid #d4d0c8;border-left:1px solid #d4d0c8;border-right:1px solid #404040;border-bottom:1px solid #404040"></div>
<div class="a" style="left:685px;top:758px;width:14px;height:14px;border-top:1px solid #fff;border-left:1px solid #fff;border-right:1px solid #808080;border-bottom:1px solid #808080"></div>
<svg class="a" style="left:684px;top:757px" width="16" height="16" viewBox="0 0 16 16"><path d="M4 6h8l-4 4z" fill="#000"/></svg>
<div class="a" style="left:707px;top:195px;width:269px;height:552px;background:#fff;border:1px solid #808080;border-right:none"></div>
<svg class="a" style="left:720px;top:208px" width="32" height="32" viewBox="0 0 32 32"><ellipse cx="17" cy="30" rx="10" ry="1.6" fill="#000" opacity="0.08"/><use href="#g16" x="1" y="1" width="30" height="30"/></svg>
<div class="t" style="left:768px;top:205px;font-size:18px;line-height:22px;color:#222;letter-spacing:0.6px">sms<span style="margin:0 0.5px">.</span>1sms<span style="margin:0 0.5px">.</span>co<span style="margin:0 0.5px">.</span>kr-https -test</div>
<div class="a" style="left:720px;top:246px;width:256px;height:27px;background:linear-gradient(#fdfdfd,#e4e2de);border:1px solid #c8c8c8;border-right:none"></div>
<div class="t" style="left:727px;top:251px;">필터:</div>
<div class="a" style="left:758px;top:249px;width:112px;height:21px;background:#fff"></div>
<div class="a" style="left:870px;top:249px;width:9px;height:21px;background:#d4d0c8"></div>
<svg class="a" style="left:870px;top:255px" width="9" height="8" viewBox="0 0 9 8"><path d="M2 3h5l-2.5 3z" fill="#000"/></svg>
<svg class="a" style="left:882px;top:250px" width="18" height="17" viewBox="0 0 18 17"><rect x="1.5" y="5.5" width="6" height="10" rx="2.5" fill="#b4b4b4" stroke="#989898"/><rect x="10.5" y="5.5" width="6" height="10" rx="2.5" fill="#b4b4b4" stroke="#989898"/><rect x="2.5" y="1.5" width="4" height="5" rx="1.5" fill="#c4c4c4" stroke="#a0a0a0"/><rect x="11.5" y="1.5" width="4" height="5" rx="1.5" fill="#c4c4c4" stroke="#a0a0a0"/><rect x="7" y="6" width="4" height="4" fill="#a8a8a8"/><path d="M3 8v5M12 8v5" stroke="#e0e0e0"/></svg>
<div class="t" style="left:901px;top:251px;color:#8a8a8a;letter-spacing:0.4px">이동(G)</div>
<svg class="a" style="left:952px;top:255px" width="8" height="8" viewBox="0 0 8 8"><path d="M1 3h5l-2.5 3z" fill="#8a8a8a"/></svg>
<svg class="a" style="left:963px;top:251px" width="14" height="17" viewBox="0 0 14 17"><rect x="0.5" y="0.5" width="13" height="13" fill="#fff" stroke="#707070"/><rect x="1" y="1" width="12" height="3" fill="#c8d0dc"/><path d="M6 8h1M8 8h1M10 8h1M12 8h1M6 10h1M8 10h1M10 10h1M12 10h1M6 12h1M8 12h1M10 12h1M12 12h1" stroke="#6080a0"/><path d="M1 14c0-3 2-5 5-5v-2l4 3.5-4 3.5v-2c-2 0-3 1-4 2z" fill="#2a8ae0" stroke="#1a5aa0" stroke-width="0.5"/></svg>
<div class="a" style="left:720px;top:273px;width:256px;height:461px;border-left:1px solid #b0b0b0;border-bottom:1px solid #b0b0b0"></div>
<div class="t" style="left:733px;top:273px;font-weight:bold;font-size:13px;letter-spacing:0.6px">ASP.NET</div>
<div class="a" style="left:721px;top:292px;width:255px;height:1px;background:#b8d0ec"></div>
<div class="t" style="left:733px;top:536px;font-weight:bold;font-size:13px;letter-spacing:0.8px">IIS</div>
<div class="a" style="left:721px;top:555px;width:255px;height:1px;background:#b8d0ec"></div>
<svg class="a" style="left:741px;top:301px" width="32" height="32" viewBox="0 0 32 32"><path d="M2.5 0.5h12.959999999999999l4.040000000000001 4.040000000000001v17.96h-17z" fill="url(#gpaper)" stroke="#c0b8a8"/><path d="M15.459999999999999 0.5v4.040000000000001h4.040000000000001" fill="#fff" stroke="#c0b8a8"/><circle cx="6" cy="7" r="0.9" fill="#606060"/><path d="M8 7h8" stroke="#606060" stroke-width="1.1"/><circle cx="6" cy="11" r="0.9" fill="#606060"/><path d="M8 11h8" stroke="#606060" stroke-width="1.1"/><circle cx="6" cy="15" r="0.9" fill="#606060"/><path d="M8 15h8" stroke="#606060" stroke-width="1.1"/><path d="M17.6 18.240000000000002v-2.6399999999999997a4.6499999999999995 6.6 0 0 1 9.299999999999999 0v2.6399999999999997" fill="none" stroke="#a88a38" stroke-width="2.015"/><rect x="14.5" y="17.8" width="15.5" height="13.2" rx="1.2" fill="url(#ggold)" stroke="#8a6a20" stroke-width="0.7"/><path d="M15.5 21.1h13.5" stroke="#d8b450" stroke-width="0.8"/><path d="M15.5 24.4h13.5" stroke="#d8b450" stroke-width="0.8"/><path d="M15.5 27.7h13.5" stroke="#d8b450" stroke-width="0.8"/></svg>
<svg class="a" style="left:816px;top:301px" width="32" height="32" viewBox="0 0 32 32"><g transform="translate(5.0,-0.5) scale(1.125)"><use href="#g16" width="16" height="16"/></g><rect x="1.5" y="10.5" width="10" height="12" fill="#f6f6f6" stroke="#8a8a8a"/><rect x="4.5" y="12.5" width="10" height="13" fill="#fff" stroke="#8a8a8a"/><path d="M6 16.0h7" stroke="#3a5ab8" stroke-width="1.1"/><path d="M6 18.4h7" stroke="#3a5ab8" stroke-width="1.1"/><path d="M6 20.8h7" stroke="#3a5ab8" stroke-width="1.1"/><path d="M6 23.2h7" stroke="#3a5ab8" stroke-width="1.1"/><path d="M14.8 30.5c0-10.07 3.96-11.925 9.0-11.925s9.0 1.8550000000000002 9.0 11.925z" fill="#8ab8e8" stroke="#5a88b8" stroke-width="0.7"/><path d="M21.64 18.840000000000003l2.16 7.949999999999999 2.16-7.949999999999999z" fill="#f4f8ff"/><ellipse cx="23.8" cy="11.95" rx="5.040000000000001" ry="7.949999999999999" fill="#a87048"/><path d="M18.400000000000002 11.95c0-5.300000000000001 2.16-7.949999999999999 5.3999999999999995-7.949999999999999s5.3999999999999995 2.6500000000000004 5.3999999999999995 7.949999999999999c-1.8-2.6500000000000004-3.6-3.4450000000000003-5.3999999999999995-3.4450000000000003s-3.6 0.7949999999999999-5.3999999999999995 3.4450000000000003z" fill="#3a3e42"/></svg>
<svg class="a" style="left:891px;top:301px" width="32" height="32" viewBox="0 0 32 32"><g transform="translate(6.0,0.0) scale(1.4375)"><use href="#g16" width="16" height="16"/></g><rect x="1.5" y="13.5" width="11" height="14" fill="#f6f6f6" stroke="#8a8a8a"/><rect x="4.5" y="16.5" width="12" height="14" fill="#fff" stroke="#8a8a8a"/><path d="M6.5 20.0h8" stroke="#3a5ab8" stroke-width="1.1"/><path d="M6.5 22.6h8" stroke="#3a5ab8" stroke-width="1.1"/><path d="M6.5 25.2h8" stroke="#3a5ab8" stroke-width="1.1"/><path d="M6.5 27.8h8" stroke="#3a5ab8" stroke-width="1.1"/><path d="M21.5 25l3.5 4.5 7-11" fill="none" stroke="#30c030" stroke-width="2.8"/></svg>
<svg class="a" style="left:966px;top:301px" width="32" height="32" viewBox="0 0 32 32"><path d="M3 3c4 1 9 1 13-1 4 2 9 2 13 1v12c0 6-5 10-13 13C8 25 3 21 3 15z" fill="#f2f4f6" stroke="#9aa0a8" stroke-width="1.3"/><path d="M16 8c3 1 6 1 8 0v7c0 4-3 7-8 9z" fill="#b8c8d8"/></svg>
<div class="lbl" style="left:719.5px;top:335px">.NET 권한<br>부여 규칙</div>
<div class="lbl" style="left:794.5px;top:335px">.NET 사용자</div>
<div class="lbl" style="left:869.5px;top:335px">.NET 신뢰<br>수준</div>
<div class="lbl" style="left:944.5px;top:335px">.NET 역할</div>
<svg class="a" style="left:741px;top:376px" width="32" height="32" viewBox="0 0 32 32"><rect x="1.5" y="0.5" width="21" height="23" fill="#f8f8f8" stroke="#6a6a6a"/><path d="M3 3.5h18M3 6h18" stroke="#b0b0b0"/><rect x="3.5" y="8.5" width="15" height="13" fill="#fff" stroke="#9a9a9a"/><rect x="6.5" y="12.5" width="24" height="18" fill="#e8f0f8" stroke="#7a8088"/><rect x="9.5" y="15.5" width="7" height="7" fill="#fff" stroke="#6a7078"/><path d="M19 17h9" stroke="#5a7ac0" stroke-width="1.2"/><path d="M19 20h9" stroke="#5a7ac0" stroke-width="1.2"/><path d="M19 23h9" stroke="#5a7ac0" stroke-width="1.2"/><path d="M9 29h3M19 29h3" stroke="#666" stroke-width="1.5"/></svg>
<svg class="a" style="left:816px;top:376px" width="32" height="32" viewBox="0 0 32 32"><rect x="1.5" y="0.5" width="27" height="22" fill="#fff" stroke="#6a6a6a"/><rect x="2" y="1" width="26" height="4" fill="#e6e6de"/><path d="M2 5.5h26" stroke="#8a8a8a"/><path d="M3 3h14.0" stroke="#aaa" stroke-width="0.8"/><g transform="translate(8.7,5.199999999999999) scale(0.75)"><use href="#g16" width="16" height="16"/></g><rect x="9.5" y="16.5" width="22.5" height="15" fill="#f6f2ee" stroke="#7a7a7a"/><circle cx="28" cy="20" r="1.5" fill="#d02020"/><path d="M13 25h14" stroke="#555" stroke-width="0.9"/><path d="M13 27h14" stroke="#555" stroke-width="0.9"/><path d="M13 29h14" stroke="#555" stroke-width="0.9"/></svg>
<svg class="a" style="left:891px;top:376px" width="32" height="32" viewBox="0 0 32 32"><ellipse cx="9.4" cy="3.5" rx="8.4" ry="3.2" fill="#ffe088" stroke="#c89a20" stroke-width="0.6"/><path d="M1 3.5v21c0 2 3.8 3.3 8.4 3.3s8.4-1.3 8.4-3.3v-21c0 2-3.8 3.2-8.4 3.2S1 5.5 1 3.5z" fill="#f4c440" stroke="#c89a20" stroke-width="0.6"/><path d="M4 7v18" stroke="#fff2b0" stroke-width="2" opacity="0.7"/><path d="M16 29.8c0-9.5 3.52-11.25 8.0-11.25s8.0 1.7500000000000002 8.0 11.25z" fill="#8ab8e8" stroke="#5a88b8" stroke-width="0.7"/><path d="M22.08 18.8l1.92 7.5 1.92-7.5z" fill="#f4f8ff"/><ellipse cx="24.0" cy="12.3" rx="4.48" ry="7.5" fill="#a87048"/><path d="M19.2 12.3c0-5.0 1.92-7.5 4.8-7.5s4.8 2.5 4.8 7.5c-1.6-2.5-3.2-3.25-4.8-3.25s-3.2 0.75-4.8 3.25z" fill="#3a3e42"/><path d="M9.0 21.93v-1.98a3.0 4.95 0 0 1 6.0 0v1.98" fill="none" stroke="#a88a38" stroke-width="1.6"/><rect x="7" y="21.6" width="10" height="9.9" rx="1.2" fill="url(#ggold)" stroke="#8a6a20" stroke-width="0.7"/><path d="M8 24.075000000000003h8" stroke="#d8b450" stroke-width="0.8"/><path d="M8 26.55h8" stroke="#d8b450" stroke-width="0.8"/><path d="M8 29.025000000000002h8" stroke="#d8b450" stroke-width="0.8"/></svg>
<svg class="a" style="left:966px;top:376px" width="32" height="32" viewBox="0 0 32 32"><path d="M2 30.5c0-10.83 5.72-12.825000000000001 13.0-12.825000000000001s13.0 1.995 13.0 12.825000000000001z" fill="#9a78cc" stroke="#7a58aa" stroke-width="0.7"/><path d="M11.879999999999999 17.96l3.12 8.549999999999999 3.12-8.549999999999999z" fill="#f4f8ff"/><ellipse cx="15.0" cy="10.549999999999999" rx="7.280000000000001" ry="8.549999999999999" fill="#d8a080"/><path d="M7.2 10.549999999999999c0-5.7 3.12-8.549999999999999 7.8-8.549999999999999s7.8 2.85 7.8 8.549999999999999c-2.6-2.85-5.2-3.705-7.8-3.705s-5.2 0.855-7.8 3.705z" fill="#7a5232"/></svg>
<div class="lbl" style="left:719.5px;top:410px">.NET 프로필</div>
<div class="lbl" style="left:794.5px;top:410px">SMTP 전자<br>메일</div>
<div class="lbl" style="left:869.5px;top:410px">공급자</div>
<div class="lbl" style="left:944.5px;top:410px">세션 상태</div>
<svg class="a" style="left:741px;top:451px" width="32" height="32" viewBox="0 0 32 32"><rect x="1.5" y="0.5" width="29" height="24" fill="#fff" stroke="#6a6a6a"/><rect x="2" y="1" width="28" height="4" fill="#e6e6de"/><path d="M2 5.5h28" stroke="#8a8a8a"/><path d="M3 3h15.0" stroke="#aaa" stroke-width="0.8"/><path d="M4 9.5h9" stroke="#2a5a2a" stroke-width="1.3"/><path d="M4 12.5h23" stroke="#3a5ad0" stroke-width="1.3"/><path d="M4 12.5h3" stroke="#d04040" stroke-width="1.3"/><path d="M9 12.5v10" stroke="#3a6ad0" stroke-width="1.3"/><path d="M4 16h4" stroke="#8a7a50" stroke-width="1"/><path d="M4 19h4" stroke="#8a7a50" stroke-width="1"/><path d="M4 22h4" stroke="#8a7a50" stroke-width="1"/><path d="M11 16h4" stroke="#5a6a90" stroke-width="1"/><path d="M11 20h4" stroke="#5a6a90" stroke-width="1"/><rect x="19.5" y="15.5" width="8" height="4" fill="#fff" stroke="#3a5ab0"/><rect x="19.5" y="18.5" width="12.5" height="13" fill="#fff8b8" stroke="#d8c030" stroke-width="1.5"/><rect x="21.5" y="20.5" width="3.5" height="9" fill="#fff" stroke="#5a4a70"/><path d="M26.5 23h4M26.5 27h4" stroke="#3a3a90" stroke-width="1.3"/></svg>
<div class="lbl" style="left:719.5px;top:485px">페이지 및<br>컨트롤</div>
<svg class="a" style="left:741px;top:564px" width="32" height="32" viewBox="0 0 32 32"><path d="M6.5 0.5h18.0l6.000000000000001 6.000000000000001v23.5h-24z" fill="url(#gpaper)" stroke="#c0b8a8"/><path d="M24.5 0.5v6.000000000000001h6.000000000000001" fill="#fff" stroke="#c0b8a8"/><g transform="translate(12.2,5.8) scale(0.775)"><use href="#g16" width="16" height="16"/></g><path d="M17 22.0h9" stroke="#555" stroke-width="1"/><path d="M17 24.5h9" stroke="#555" stroke-width="1"/><path d="M17 27.0h9" stroke="#555" stroke-width="1"/><circle cx="7.3" cy="23.7" r="5.8" fill="#a8bcd8" stroke="#6a80a0" stroke-width="1.2" stroke-dasharray="2 1.2"/><circle cx="7.3" cy="23.7" r="3.8" fill="#8aa0c0"/><circle cx="7.3" cy="23.7" r="2" fill="#fffbe8"/></svg>
<svg class="a" style="left:816px;top:564px" width="32" height="32" viewBox="0 0 32 32"><path d="M1.5 0.5h11.52l3.4800000000000004 3.4800000000000004v18.02h-15z" fill="url(#gpaper)" stroke="#c0b8a8"/><path d="M13.02 0.5v3.4800000000000004h3.4800000000000004" fill="#fff" stroke="#c0b8a8"/><circle cx="4.5" cy="8.0" r="0.9" fill="#707070"/><path d="M6.5 8.0h4" stroke="#707070" stroke-width="1.1"/><circle cx="4.5" cy="11.5" r="0.9" fill="#707070"/><path d="M6.5 11.5h4" stroke="#707070" stroke-width="1.1"/><circle cx="4.5" cy="15.0" r="0.9" fill="#707070"/><path d="M6.5 15.0h4" stroke="#707070" stroke-width="1.1"/><rect x="9.5" y="11.9" width="10" height="16.2" fill="#fff" stroke="#8a8a8a"/><g transform="translate(10.0,16.0) scale(0.5)"><use href="#g16" width="16" height="16"/></g><rect x="18.9" y="14.9" width="13" height="16.3" fill="#fff" stroke="#8a8a8a"/><g transform="translate(20.9,18.5) scale(0.5625)"><use href="#g16" width="16" height="16"/></g><path d="M14 9c3-4 9-4 12 0l2-1.5-.5 6-5.5-2 2-1.2c-2.5-2.5-6-2.5-8.5 0z" fill="#2a8ae0" stroke="#1a5aa0" stroke-width="0.5"/></svg>
<svg class="a" style="left:891px;top:564px" width="32" height="32" viewBox="0 0 32 32"><path d="M7.5 0.5h18.0l6.000000000000001 6.000000000000001v23.5h-24z" fill="#eef4fa" stroke="#a8b0b8"/><path d="M25.5 0.5v6.000000000000001h6.000000000000001" fill="#fff" stroke="#a8b0b8"/><rect x="8" y="1" width="15" height="11" fill="#fff0a8"/><path d="M9.5 3.5h11" stroke="#806020" stroke-width="1.1"/><path d="M9.5 5.9h11" stroke="#806020" stroke-width="1.1"/><path d="M9.5 8.3h11" stroke="#806020" stroke-width="1.1"/><path d="M9.5 10.7h11" stroke="#806020" stroke-width="1.1"/><path d="M1 15l6.5-5.5v3.5h8.5v4h-8.5v3.5z" fill="#50d850" stroke="#30a030" stroke-width="0.7"/><path d="M17 13.5v5M19 13.5v5" stroke="#30a030" stroke-width="1.2"/><path d="M11 21h16" stroke="#4a78c0" stroke-width="1.1"/><path d="M11 24h16" stroke="#4a78c0" stroke-width="1.1"/><path d="M11 27h16" stroke="#4a78c0" stroke-width="1.1"/></svg>
<svg class="a" style="left:966px;top:564px" width="32" height="32" viewBox="0 0 32 32"><g transform="translate(5.5,1.5999999999999996) scale(1.5)"><use href="#g16" width="16" height="16"/></g></svg>
<div class="lbl" style="left:719.5px;top:598px">ASP</div>
<div class="lbl" style="left:794.5px;top:598px">HTTP<br>리디렉션</div>
<div class="lbl" style="left:869.5px;top:598px">HTTP 응답<br>헤더</div>
<div class="lbl" style="left:944.5px;top:598px">ISAPI 필터</div>
<svg class="a" style="left:741px;top:639px" width="32" height="32" viewBox="0 0 32 32"><path d="M2.5 0.5h12.959999999999999l4.040000000000001 4.040000000000001v17.96h-17z" fill="url(#gpaper)" stroke="#c0b8a8"/><path d="M15.459999999999999 0.5v4.040000000000001h4.040000000000001" fill="#fff" stroke="#c0b8a8"/><circle cx="6" cy="7" r="0.9" fill="#606060"/><path d="M8 7h8" stroke="#606060" stroke-width="1.1"/><circle cx="6" cy="11" r="0.9" fill="#606060"/><path d="M8 11h8" stroke="#606060" stroke-width="1.1"/><circle cx="6" cy="15" r="0.9" fill="#606060"/><path d="M8 15h8" stroke="#606060" stroke-width="1.1"/><path d="M17.6 18.240000000000002v-2.6399999999999997a4.6499999999999995 6.6 0 0 1 9.299999999999999 0v2.6399999999999997" fill="none" stroke="#a88a38" stroke-width="2.015"/><rect x="14.5" y="17.8" width="15.5" height="13.2" rx="1.2" fill="url(#ggold)" stroke="#8a6a20" stroke-width="0.7"/><path d="M15.5 21.1h13.5" stroke="#d8b450" stroke-width="0.8"/><path d="M15.5 24.4h13.5" stroke="#d8b450" stroke-width="0.8"/><path d="M15.5 27.7h13.5" stroke="#d8b450" stroke-width="0.8"/></svg>
<svg class="a" style="left:816px;top:639px" width="32" height="32" viewBox="0 0 32 32"><path d="M3.5 0.5h17.712l5.888000000000001 5.888000000000001v23.811999999999998h-23.6z" fill="#f8f8f8" stroke="#b0b0b0"/><path d="M21.212 0.5v5.888000000000001h5.888000000000001" fill="#fff" stroke="#b0b0b0"/><circle cx="24.5" cy="23.3" r="7" fill="#101010" stroke="#9a9a9a" stroke-width="1.3"/><path d="M21 23.5l2.5 3.2 4.5-6.5" fill="none" stroke="#fff" stroke-width="2"/></svg>
<svg class="a" style="left:891px;top:639px" width="32" height="32" viewBox="0 0 32 32"><rect x="1.5" y="2.2" width="28.6" height="23.5" fill="#fff" stroke="#6a6a6a"/><rect x="2" y="2.7" width="27.6" height="4" fill="#e6e6de"/><path d="M2 7.2h27.6" stroke="#8a8a8a"/><path d="M3 4.7h14.8" stroke="#aaa" stroke-width="0.8"/><path d="M4 10.5h10" stroke="#222" stroke-width="1.4"/><path d="M6 14.0h8" stroke="#333" stroke-width="1.1"/><path d="M6 16.8h8" stroke="#333" stroke-width="1.1"/><path d="M6 19.6h8" stroke="#333" stroke-width="1.1"/><path d="M17.5 21.5l-5.5 8" stroke="#6a6a6a" stroke-width="2.6"/><circle cx="22.4" cy="16" r="6.3" fill="#dfeaf8" stroke="#7a7a7a" stroke-width="1.6"/></svg>
<svg class="a" style="left:966px;top:639px" width="32" height="32" viewBox="0 0 32 32"><rect x="2.5" y="1" width="22" height="27" rx="4" fill="#8ea4cc" stroke="#5a6a98"/><path d="M3 5.0h21" stroke="#c8d4ec" stroke-width="1"/><path d="M3 8.8h21" stroke="#c8d4ec" stroke-width="1"/><path d="M3 12.6h21" stroke="#c8d4ec" stroke-width="1"/><path d="M3 16.4h21" stroke="#c8d4ec" stroke-width="1"/><path d="M3 20.2h21" stroke="#c8d4ec" stroke-width="1"/><path d="M3 24.0h21" stroke="#c8d4ec" stroke-width="1"/></svg>
<div class="lbl" style="left:719.5px;top:673px">권한 부여<br>규칙</div>
<div class="lbl" style="left:794.5px;top:673px">기본 문서</div>
<div class="lbl" style="left:869.5px;top:673px">디렉터리<br>검색</div>
<div class="lbl" style="left:944.5px;top:673px">로깅</div>
<div class="a" style="left:721px;top:700px;width:255px;height:33px;overflow:hidden">
<svg class="a" style="left:20px;top:14px" width="32" height="32" viewBox="0 0 32 32"><path d="M10.5 0.5h14.399999999999999l4.6000000000000005 4.6000000000000005v18.4h-19z" fill="#fff" stroke="#b0b0b0"/><path d="M24.9 0.5v4.6000000000000005h4.6000000000000005" fill="#fff" stroke="#b0b0b0"/><path d="M12 8h14" stroke="#4a78c0" stroke-width="1.2"/><path d="M12 11h14" stroke="#4a78c0" stroke-width="1.2"/><path d="M12 14h14" stroke="#4a78c0" stroke-width="1.2"/><path d="M12 17h14" stroke="#4a78c0" stroke-width="1.2"/><circle cx="8" cy="8.6" r="5" fill="#30b040" stroke="#208030" stroke-width="0.6"/><path d="M5.5 8.5l2 2 3-4" fill="none" stroke="#fff" stroke-width="1.2"/><circle cx="8" cy="20" r="5" fill="#d83020"/></svg>
<svg class="a" style="left:95px;top:14px" width="32" height="32" viewBox="0 0 32 32"><path d="M13 30c0-11.4 4.4-13.5 10.0-13.5s10.0 2.1 10.0 13.5z" fill="#8ab8e8" stroke="#5a88b8" stroke-width="0.7"/><path d="M20.6 16.8l2.4 9.0 2.4-9.0z" fill="#f4f8ff"/><ellipse cx="23.0" cy="9.0" rx="5.6000000000000005" ry="9.0" fill="#a87048"/><path d="M17.0 9.0c0-6.0 2.4-9.0 6.0-9.0s6.0 3.0 6.0 9.0c-2.0-3.0-4.0-3.9000000000000004-6.0-3.9000000000000004s-4.0 0.8999999999999999-6.0 3.9000000000000004z" fill="#3a3e42"/><path d="M-1.4 19a4.5 4.5 0 0 1 9 0v6" fill="none" stroke="#c8a030" stroke-width="2"/></svg>
<svg class="a" style="left:170px;top:14px" width="32" height="32" viewBox="0 0 32 32"><rect x="9.5" y="2.5" width="23" height="24" fill="#c4d8f0" stroke="#6a88b0"/><path d="M26 3v23" stroke="#fff" stroke-width="2" opacity="0.6"/><path d="M3 9.5h12v-4l8 6-8 6v-4H3z" fill="#3a9ae8" stroke="#1a68b0" stroke-width="0.7"/><path d="M-1 9.5h2M-1 13.5h2" stroke="#3a9ae8" stroke-width="1.5"/></svg>
<svg class="a" style="left:245px;top:14px" width="32" height="32" viewBox="0 0 32 32"><rect x="1.5" y="7.5" width="14" height="24" fill="#c8c8c8" stroke="#707070"/><path d="M2 11h13" stroke="#707070" stroke-width="1"/><path d="M2 14h13" stroke="#707070" stroke-width="1"/><path d="M2 17h13" stroke="#707070" stroke-width="1"/><path d="M2 20h13" stroke="#707070" stroke-width="1"/></svg>
</div>
<div class="a" style="left:713px;top:750px;width:77px;height:20px;background:#fff;border:1px solid #0a246a"></div>
<svg class="a" style="left:715px;top:752px" width="17" height="16" viewBox="0 0 17 16"><rect x="0.5" y="0.5" width="16" height="15" fill="#fafafa" stroke="#8a8e98"/><rect x="1" y="1" width="15" height="2.5" fill="#c8ccd4"/><path d="M1 3.5h15" stroke="#8a8e98"/><path d="M5.5 3.5v12M12.5 3.5v12" stroke="#9aa0aa"/><path d="M2 6.5h2M2 9h2M2 11.5h2M14 6.5h1.5M14 9h1.5" stroke="#b0b4bc"/><path d="M7 7h4M7 9.5h4M7 12h4" stroke="#6a5030"/></svg>
<div class="t" style="left:733px;top:752px;">기능 보기</div>
<svg class="a" style="left:791px;top:751px" width="18" height="19" viewBox="0 0 18 19"><path d="M1.5 4.5h5l1.5 1.5h6v10h-12.5z" fill="#e8b850" stroke="#a88030"/><path d="M2 8h12v8H2z" fill="#f4d078"/><path d="M5 2.5h6l2 2" fill="none" stroke="#c0c0c0"/><rect x="9.5" y="8.5" width="7" height="9.5" fill="#fff" stroke="#7a8aa8"/><path d="M11 11h4M11 13h4M11 15h4" stroke="#5a7ab0"/></svg>
<div class="t" style="left:810px;top:752px;">콘텐츠 보기</div>
<div class="a" style="left:69px;top:776px;width:907px;height:1px;background:#fff"></div>
<div class="a" style="left:69px;top:779px;width:907px;height:20px;border-top:1px solid #808080;border-left:1px solid #808080"></div>
<div class="a" style="left:70px;top:796px;width:906px;height:1px;background:#fff"></div>
</body></html>
